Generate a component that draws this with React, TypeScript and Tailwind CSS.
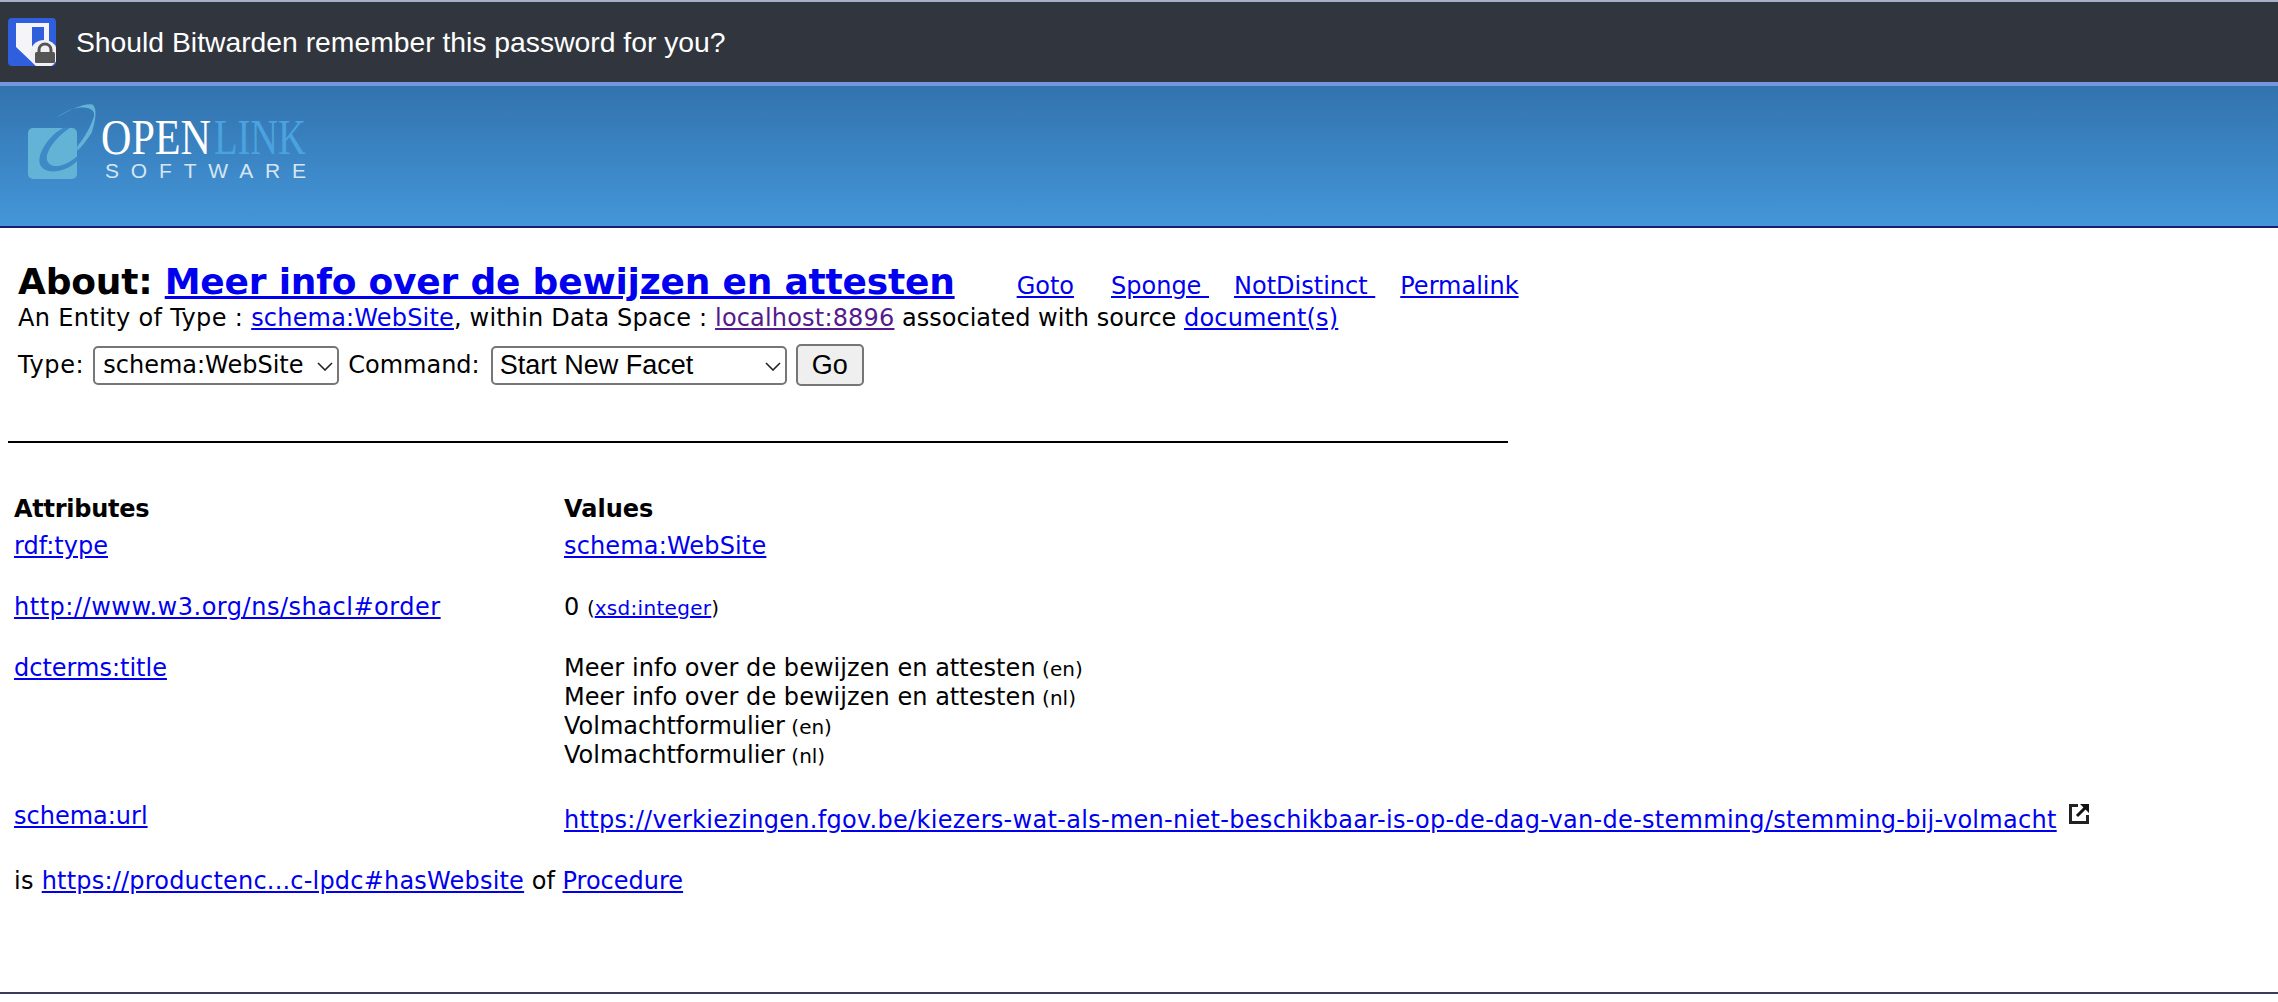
const bodyFont = "font-['DejaVu_Sans',sans-serif]";
const link = "text-[#0000ee] underline";

function BitwardenIcon() {
  return (
    <svg width="48" height="48" viewBox="0 0 48 48">
      <rect width="48" height="48" rx="4" fill="#2f5fdc" />
      <path d="M8 5H41V30H30V48H28L8 29Z" fill="#f5f5f7" />
      <path d="M24 9H36V30H24Z" fill="#2f5fdc" />
      <circle cx="36" cy="36" r="14" fill="#f1f1f3" />
      <path d="M31 35V32C31 24 43 24 43 32V35" fill="none" stroke="#555" strokeWidth="3" />
      <rect x="27" y="34" width="20" height="11" rx="1.5" fill="#555" />
    </svg>
  );
}

function OpenLinkLogo() {
  return (
    <svg width="400" height="84" viewBox="0 0 400 84">
      <rect x="4" y="28" width="49" height="51" rx="5" fill="#62b3d6" />
      <path d="M39.3 27.7C24.3 36 12.7 54.3 16 64.3C19.3 74.3 39.3 74.3 53.3 61V56C42.7 66 26 71 22.7 59.3C22 51 31 37.7 46 27.7Z" fill="#3e8ac7" />
      <path d="M32.7 17.7C46 10 61 2.7 68.7 4.7C73.3 8.7 72 19.3 67.7 32.7C61 42.7 57 47 53.3 51V46C61 37.7 67.7 24.3 70 16C71 9.3 64.3 5.3 49.3 8.7C43 11 37 14 32.7 17.7Z" fill="#62b3d6" />
      <text transform="translate(77 54) scale(0.843 1)" fontFamily="'Liberation Serif',serif" fontSize="50" fill="#ffffff">OPEN</text>
      <text transform="translate(190 54) scale(0.77 1)" fontFamily="'Liberation Serif',serif" fontSize="50" fill="#4aa3de">LINK</text>
      <text x="81" y="78" fontFamily="'Liberation Sans',sans-serif" fontSize="21" textLength="201" fill="#d5e6f3">SOFTWARE</text>
    </svg>
  );
}

function ExternalIcon() {
  return (
    <svg width="24" height="24" viewBox="0 0 24 24" className="ml-[10px] inline-block align-[2px]">
      <path d="M11 3.5H3.5V20.5H20.5V13" fill="none" stroke="#222" strokeWidth="3" />
      <path d="M10 14L19 5" stroke="#111" strokeWidth="3" />
      <path d="M13 2H22V11Z" fill="#111" />
    </svg>
  );
}

function Chevron() {
  return (
    <svg width="16" height="9" viewBox="0 0 16 9" className="pointer-events-none absolute right-[6px] top-[16px]">
      <path d="M1 1L8 8L15 1" fill="none" stroke="#222" strokeWidth="1.6" />
    </svg>
  );
}

function Lang({ code }: { code: string }) {
  return <span className="text-[20px] leading-none"> ({code})</span>;
}

function AttrRow({ name, children, className }: { name: React.ReactNode; children: React.ReactNode; className?: string }) {
  return (
    <div className={`grid grid-cols-[550px_1fr] ${className ?? ""}`}>
      <div>{name}</div>
      <div>{children}</div>
    </div>
  );
}

export default function App() {
  return (
    <div className={`h-[1002px] overflow-hidden bg-white text-black ${bodyFont} text-[24px] leading-[29px]`}>
      <div className="flex h-[86px] items-center gap-[20px] border-t-2 border-b-4 border-t-[#a9b0c9] border-b-[#7297e0] bg-[#31353e] pl-[8px] font-['Liberation_Sans',sans-serif] text-[28.3px] text-white">
        <BitwardenIcon />
        <span>Should Bitwarden remember this password for you?</span>
      </div>

      <div className="h-[142px] border-b-2 border-[#1c1c6e] bg-gradient-to-b from-[#3273ae] to-[#4496d9] pl-[24px] pt-[14px]">
        <OpenLinkLogo />
      </div>

      <div className="pl-[18px] pt-[32px]">
        <div className="flex items-baseline">
          <h1 className="text-[36px] font-bold leading-[44px] tracking-[-0.2px]">
            About: <a className={link}>Meer info over de bewijzen en attesten</a>
          </h1>
          <div className="ml-[62px] flex gap-[25px]">
            <a className={`${link} mr-[12px]`}>Goto</a>
            <a className={link}>Sponge&nbsp;</a>
            <a className={link}>NotDistinct&nbsp;</a>
            <a className={link}>Permalink</a>
          </div>
        </div>
        <div>
          <span className="tracking-[0.35px]">An Entity of Type : </span>
          <a className={`${link} tracking-[0.18px]`}>schema:WebSite</a>
          <span className="tracking-[0.18px]">, within Data Space : </span>
          <a className="text-[#551a8b] underline tracking-[0.18px]">localhost:8896</a> associated with source{" "}
          <a className={`${link} tracking-[0.18px]`}>document(s)</a>
        </div>
        <div className="mt-[11px] flex items-center gap-[9px]">
          <span className="tracking-[0.6px]">Type:</span>
          <div className="relative h-[39px] w-[246px]">
            <select className="h-full w-full appearance-none rounded-[5px] border-2 border-[#767676] bg-white pl-[8px] text-[24px]">
              <option>schema:WebSite</option>
            </select>
            <Chevron />
          </div>
          <span className="mr-[2px]">Command:</span>
          <div className="relative h-[39px] w-[296px]">
            <select className="h-full w-full appearance-none rounded-[5px] border-2 border-[#767676] bg-white pl-[7px] font-['Liberation_Sans',sans-serif] text-[27px]">
              <option>Start New Facet</option>
            </select>
            <Chevron />
          </div>
          <button className="h-[42px] w-[68px] rounded-[5px] border-2 border-[#767676] bg-[#efefef] font-['Liberation_Sans',sans-serif] text-[27px]">Go</button>
        </div>
      </div>

      <hr className="ml-[8px] mt-[55px] w-[1500px] border-t-2 border-black" />

      <div className="pl-[14px] pt-[52px]">
        <div className="grid grid-cols-[550px_1fr] font-bold">
          <div className="tracking-[-0.25px]">Attributes</div>
          <div>Values</div>
        </div>
        <AttrRow name={<a className={link}>rdf:type</a>} className="mt-[8px]"><a className={`${link} tracking-[0.15px]`}>schema:WebSite</a></AttrRow>
        <AttrRow name={<a className={`${link} tracking-[0.52px]`}>http://www.w3.org/ns/shacl#order</a>} className="mt-[32px]">
          0 <span className="text-[20px] leading-none">(<a className={`${link} tracking-[0.3px]`}>xsd:integer</a>)</span>
        </AttrRow>
        <AttrRow name={<a className={link}>dcterms:title</a>} className="mt-[32px]">
          <div className="tracking-[0.04px]">Meer info over de bewijzen en attesten<Lang code="en" /></div>
          <div className="tracking-[0.04px]">Meer info over de bewijzen en attesten<Lang code="nl" /></div>
          <div>Volmachtformulier<Lang code="en" /></div>
          <div>Volmachtformulier<Lang code="nl" /></div>
        </AttrRow>
        <AttrRow name={<a className={link}>schema:url</a>} className="mt-[32px]">
          <a className={`${link} whitespace-nowrap tracking-[0.295px]`}>https://verkiezingen.fgov.be/kiezers-wat-als-men-niet-beschikbaar-is-op-de-dag-van-de-stemming/stemming-bij-volmacht</a>
          <ExternalIcon />
        </AttrRow>
        <div className="mt-[32px]">
          <span className="tracking-[0.3px]">is </span>
          <a className={`${link} tracking-[0.2px]`}>https://productenc...c-lpdc#hasWebsite</a> of <a className={link}>Procedure</a>
        </div>
      </div>

      <div className="mt-[96px] border-t-2 border-[#3a3a5c]" />
    </div>
  );
}
